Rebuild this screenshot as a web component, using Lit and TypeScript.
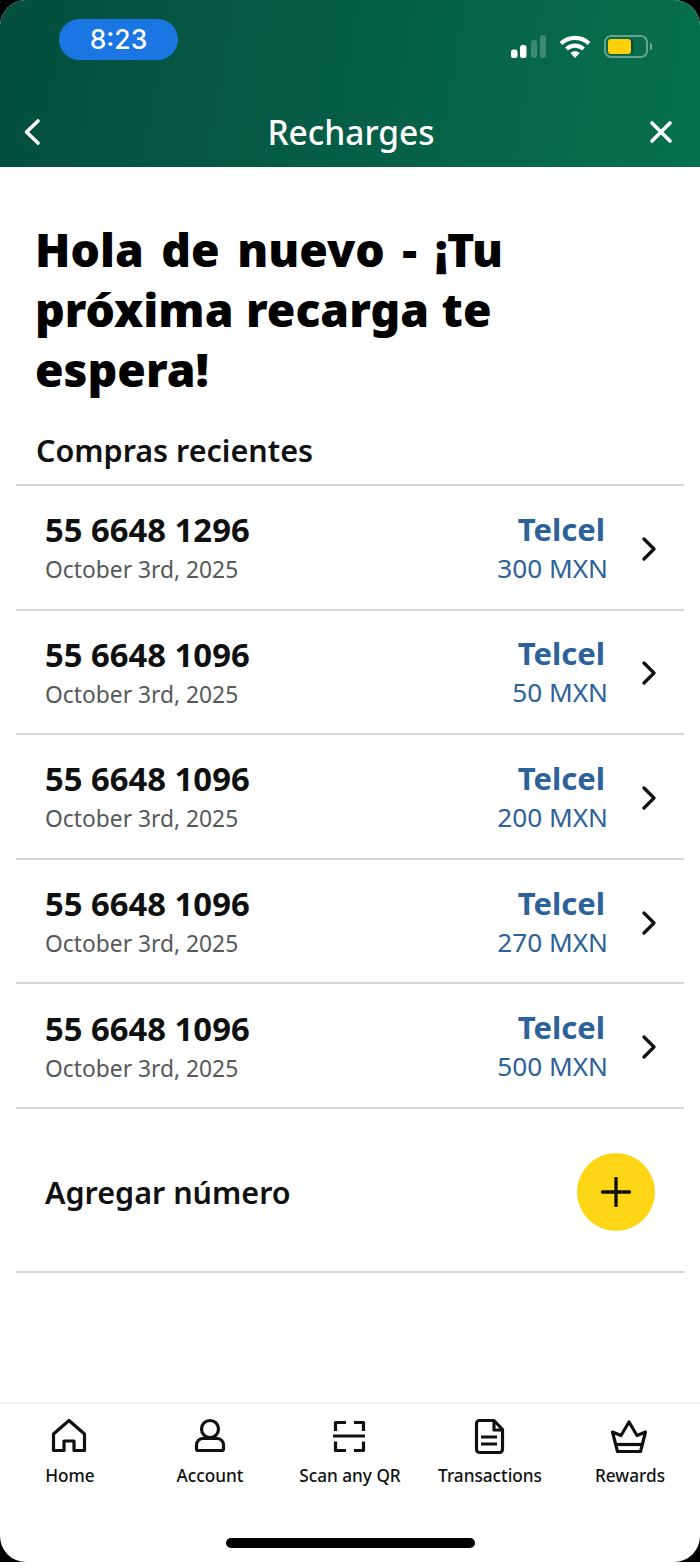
import { LitElement, css, html, svg } from "lit";
import { customElement } from "lit/decorators.js";

const recents = [
  { phone: "55 6648 1296", amount: "300 MXN" },
  { phone: "55 6648 1096", amount: "50 MXN" },
  { phone: "55 6648 1096", amount: "200 MXN" },
  { phone: "55 6648 1096", amount: "270 MXN" },
  { phone: "55 6648 1096", amount: "500 MXN" },
];

const tabs = [
  {
    label: "Home",
    icon: svg`<path d="M6.5 34.500V18L22 4.500 37.500 18V34.500H27V25H17V34.500Z" />`,
  },
  {
    label: "Account",
    icon: svg`<circle cx="23" cy="13" r="8.500" /><path d="M16 22.500h14a6.500 6.500 0 0 1 6.500 6.500v4a1.500 1.500 0 0 1-1.500 1.500H11a1.500 1.500 0 0 1-1.500-1.500v-4a6.500 6.500 0 0 1 6.500-6.500z" />`,
  },
  {
    label: "Scan any QR",
    icon: svg`<path d="M19 6.500H8.500V15M27 6.500H36.500V15M19 34.500H8.500V25.500M27 34.500H36.500V25.500M6 20H38" />`,
  },
  {
    label: "Transactions",
    icon: svg`<path d="M12.500 4.500H27L35.500 13.500V33.500a3 3 0 0 1-3 3H12.500a3 3 0 0 1-3-3V7.500a3 3 0 0 1 3-3z" /><path d="M27 5V14H35" /><path d="M14 21H30M14 28H30" />`,
  },
  {
    label: "Rewards",
    icon: svg`<path d="M22 6L30 19.500 38.500 16 33.500 35.500H10.500L5.500 16 14 19.500Z" /><path d="M10 28.500H34" />`,
  },
];

@customElement("app-root")
export class AppRoot extends LitElement {
  render() {
    return html`
      <div class="device">
        <div class="screen">
          <header class="header">
            <div class="status">
              <div class="time">8:23</div>
              <div class="status-icons">
                <svg class="signal" viewBox="0 0 36 23" width="36" height="23" fill="#fff">
                  <rect x="0" y="14.500" width="6.500" height="8.500" rx="2.500" />
                  <rect x="9" y="10" width="6.500" height="13" rx="2.500" />
                  <rect x="20" y="5" width="6" height="18" rx="2.500" opacity=".22" />
                  <rect x="29" y="0" width="6" height="23" rx="2.500" opacity=".22" />
                </svg>
                <svg class="wifi" viewBox="0 0 32 23" width="32" height="23" fill="none" stroke="#fff" stroke-width="4.200">
                  <path d="M2 8.500C10 1 22 1 30 8.500" />
                  <path d="M7.500 14c5-4.500 12-4.500 17 0" />
                  <path d="M16 23l-4.700-5c2.700-2.200 6.700-2.200 9.400 0z" fill="#fff" stroke="none" />
                </svg>
                <div class="battery"><span class="level"></span></div>
                <span class="nub"></span>
              </div>
            </div>
            <nav class="nav">
              <svg class="back" viewBox="0 0 24 30" width="24" height="30" fill="none" stroke="#fff" stroke-width="3.600" stroke-linecap="round" stroke-linejoin="round">
                <path d="M19 4L7.500 15 19 26" />
              </svg>
              <h1>Recharges</h1>
              <svg class="close" viewBox="0 0 24 24" width="24" height="24" fill="none" stroke="#fff" stroke-width="3.600" stroke-linecap="round">
                <path d="M3 3l18 18M21 3L3 21" />
              </svg>
            </nav>
          </header>

          <main class="main">
            <h2>
              <span class="first">Hola de nuevo - ¡Tu</span>
              <span>próxima recarga te</span>
              <span>espera!</span>
            </h2>
            <h3>Compras recientes</h3>
            <div class="list">
              ${recents.map(
                (r) => html`
                  <div class="row">
                    <div class="who">
                      <div class="phone">${r.phone}</div>
                      <div class="date">October 3rd, 2025</div>
                    </div>
                    <div class="plan">
                      <div class="carrier">Telcel</div>
                      <div class="amount">${r.amount}</div>
                    </div>
                    <svg class="chev" viewBox="0 0 18 24" width="18" height="24" fill="none" stroke="#0f1111" stroke-width="3.200" stroke-linecap="round" stroke-linejoin="round">
                      <path d="M4 2l10 10L4 22" />
                    </svg>
                  </div>
                `
              )}
              <div class="add">
                <span>Agregar número</span>
                <div class="fab">
                  <svg viewBox="0 0 30 30" width="30" height="30" stroke="#0f1111" stroke-width="3.400" stroke-linecap="round">
                    <path d="M15 1.500v27M1.500 15h27" />
                  </svg>
                </div>
              </div>
            </div>
          </main>

          <footer class="tabs">
            <div class="tab-row">
              ${tabs.map(
                (t) => html`
                  <div class="tab">
                    <svg viewBox="0 0 46 40" width="46" height="40" fill="none" stroke="#0f1111" stroke-width="3.200" stroke-linejoin="round">
                      ${t.icon}
                    </svg>
                    <span>${t.label}</span>
                  </div>
                `
              )}
            </div>
            <div class="home-bar"></div>
          </footer>
        </div>
      </div>
    `;
  }

  static styles = css`
    :host {
      display: block;
      width: 700px;
      height: 1568px;
      background: #fff;
      font-family: "Noto Sans", "Open Sans", sans-serif;
      color: #0f1111;
    }

    .device {
      height: 1562px;
      background: #000;
    }

    .screen {
      height: 100%;
      display: flex;
      flex-direction: column;
      background: #fff;
      border-radius: 26px;
      overflow: hidden;
    }

    .header {
      height: 167px;
      flex: none;
      box-sizing: border-box;
      background: linear-gradient(100deg, #044e3e 0%, #065c45 45%, #07704e 100%);
      color: #fff;
    }

    .status {
      display: flex;
      justify-content: space-between;
      align-items: flex-start;
      height: 41px;
      padding: 19px 48px 0 59px;
    }

    .time {
      width: 119px;
      height: 41px;
      border-radius: 21px;
      background: #1a76e3;
      font: 500 26.500px/41px Inter, sans-serif;
      text-align: center;
    }

    .status-icons {
      display: flex;
      align-items: center;
      margin-top: 16px;
    }

    .signal {
      margin-right: 12px;
    }

    .wifi {
      margin-right: 13px;
    }

    .battery {
      box-sizing: border-box;
      width: 44px;
      height: 23px;
      padding: 2px;
      border: 2px solid rgba(255, 255, 255, 0.38);
      border-radius: 7px;
    }

    .level {
      display: block;
      width: 23px;
      height: 15px;
      background: #fdcf0c;
      border-radius: 3px;
      box-shadow: 2px 0 0 #0a4a2c;
    }

    .nub {
      width: 2px;
      height: 7px;
      margin-left: 2px;
      background: rgba(255, 255, 255, 0.45);
      border-radius: 0 2px 2px 0;
    }

    .nav {
      display: grid;
      grid-template-columns: 1fr auto 1fr;
      align-items: center;
      height: 44px;
      margin-top: 50px;
      padding: 0 27px 0 29px;
    }

    .back {
      margin-left: -10px;
    }

    .close {
      justify-self: end;
    }

    .nav h1 {
      margin: 0;
      font-size: 33.500px;
      font-weight: 500;
      line-height: 44px;
    }

    .main {
      flex: 1;
      padding: 53px 16px 0;
    }

    h2 {
      margin: 0 19px;
      font-size: 46.300px;
      font-weight: 900;
      line-height: 60px;
      word-spacing: 0.500px;
      color: #000;
    }

    h2 span {
      display: block;
    }

    h2 .first {
      word-spacing: 5.500px;
    }

    h3 {
      margin: 29px 20px 13px;
      font-size: 30.500px;
      font-weight: 600;
      line-height: 42px;
    }

    .list {
      border-top: 2px solid #d5d5d5;
    }

    .row {
      display: flex;
      align-items: center;
      box-sizing: border-box;
      height: 124.600px;
      padding: 0 26px 0 29px;
      border-bottom: 2px solid #d5d5d5;
    }

    .who {
      flex: 1;
      padding-top: 5px;
    }

    .phone {
      font-size: 32.800px;
      font-weight: 700;
      line-height: 40px;
    }

    .date {
      font-size: 22.800px;
      line-height: 38px;
      margin-top: 1px;
      color: #565959;
    }

    .plan {
      text-align: right;
      margin-right: 32px;
      padding-top: 1px;
      color: #2b6299;
    }

    .carrier {
      font-size: 31px;
      font-weight: 700;
      line-height: 40px;
      padding-right: 3px;
    }

    .amount {
      font-size: 26.200px;
      line-height: 38px;
    }

    .chev {
      margin-top: 3px;
    }

    .add {
      display: flex;
      align-items: center;
      justify-content: space-between;
      box-sizing: border-box;
      height: 164px;
      padding: 4px 29px 0;
      border-bottom: 2px solid #d5d5d5;
      font-size: 30.500px;
      font-weight: 600;
    }

    .fab {
      width: 78px;
      height: 78px;
      display: flex;
      align-items: center;
      justify-content: center;
      border-radius: 50%;
      background: #fdd716;
    }

    .tabs {
      flex: none;
      height: 160px;
      box-sizing: border-box;
      border-top: 2px solid #f0f0f0;
      display: flex;
      flex-direction: column;
      align-items: center;
    }

    .tab-row {
      align-self: stretch;
      display: grid;
      grid-template-columns: repeat(5, 140px);
      padding-top: 12px;
    }

    .tab {
      display: flex;
      flex-direction: column;
      align-items: center;
      font-size: 17.200px;
      font-weight: 500;
      line-height: 24px;
      white-space: nowrap;
    }

    .tab svg {
      margin-bottom: 8px;
    }

    .home-bar {
      width: 249px;
      height: 10px;
      margin-top: 50px;
      border-radius: 5px;
      background: #000;
    }
  `;
}

declare global {
  interface HTMLElementTagNameMap {
    "app-root": AppRoot;
  }
}
